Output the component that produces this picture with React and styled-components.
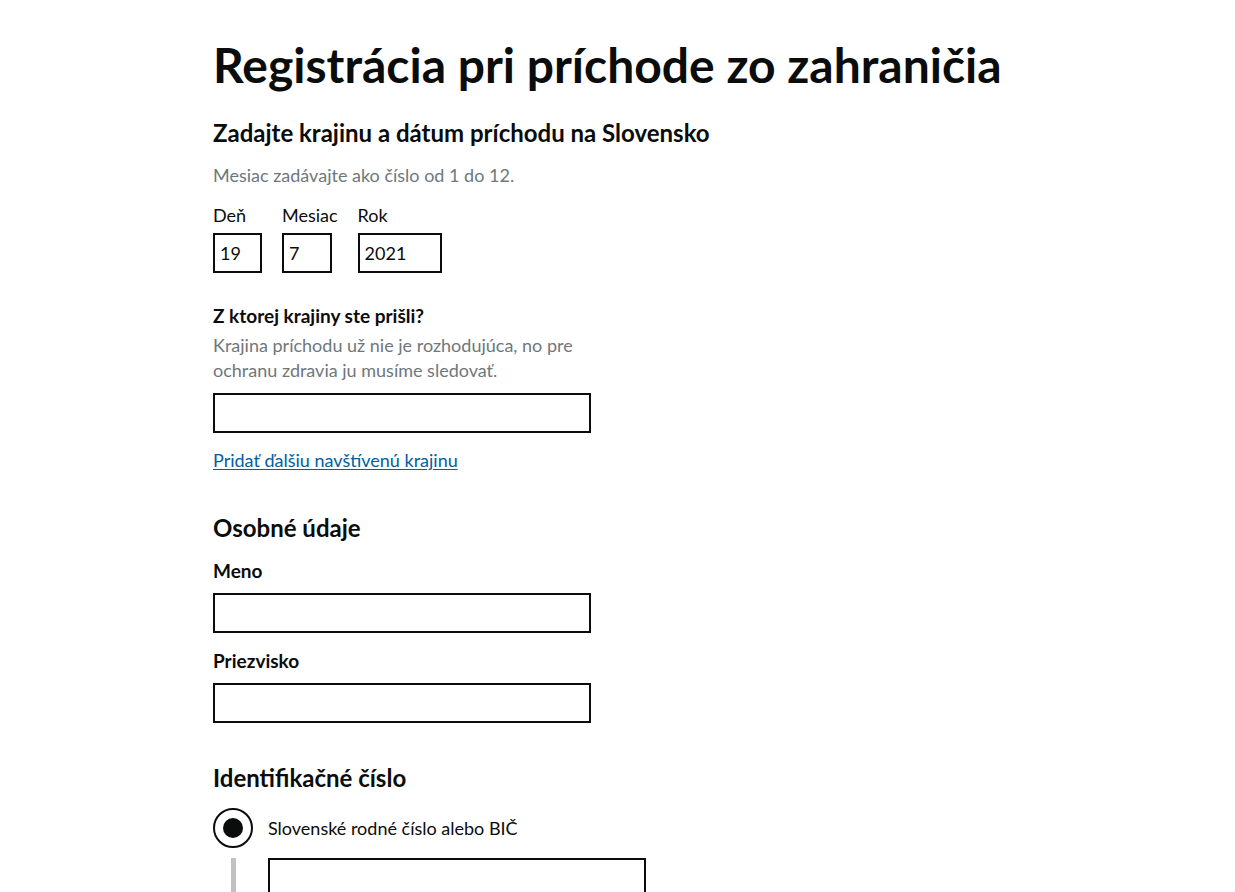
import React from "react";
import styled, { createGlobalStyle } from "styled-components";

const GlobalStyle = createGlobalStyle`
  html, body {
    margin: 0;
    padding: 0;
    background: #ffffff;
  }
  body {
    font-family: "Source Sans Pro", Lato, "Liberation Sans", sans-serif;
    color: #0b0c0c;
  }
`;

const Page = styled.main`
  width: 809px;
  margin: 0 auto;
  padding-top: 40px;
`;

const Title = styled.h1`
  margin: 0 0 28px;
  font-size: 48px;
  line-height: 50px;
  font-weight: 700;
`;

const Heading = styled.h2`
  margin: ${p => (p.$spaced ? "40px" : "0")} 0 15px;
  font-size: 24px;
  line-height: 30px;
  font-weight: 700;
`;

const Hint = styled.div`
  color: #6f777b;
  font-size: 18px;
  line-height: 25px;
  max-width: 380px;
  margin-bottom: ${p => p.$after || 15}px;
`;

const DateRow = styled.div`
  display: flex;
  gap: 20px;
  margin-bottom: 30px;
`;

const DateItem = styled.div`
  display: flex;
  flex-direction: column;
  gap: 5px;
`;

const SmallLabel = styled.label`
  font-size: 18px;
  line-height: 25px;
`;

const Label = styled.label`
  display: block;
  font-size: 19px;
  line-height: 25px;
  font-weight: 700;
  margin-bottom: ${p => p.$after || 10}px;
`;

const Input = styled.input`
  box-sizing: border-box;
  display: block;
  width: ${p => p.$w || 378}px;
  height: 40px;
  border: 2px solid #0b0c0c;
  border-radius: 0;
  padding: 5px;
  margin: 0;
  font: inherit;
  font-size: 18px;
  color: #0b0c0c;
  background: #fff;
  margin-bottom: ${p => p.$after || 0}px;
  outline: none;
`;

const Link = styled.a`
  display: inline-block;
  margin-top: 15px;
  font-size: 18px;
  line-height: 25px;
  color: #005ea5;
  text-decoration: underline;
  text-underline-offset: 2px;
`;

const RadioRow = styled.label`
  display: flex;
  align-items: center;
  gap: 15px;
  font-size: 18px;
  line-height: 25px;
`;

const RadioCircle = styled.span`
  box-sizing: border-box;
  width: 40px;
  height: 40px;
  border: 2px solid #0b0c0c;
  border-radius: 50%;
  display: flex;
  align-items: center;
  justify-content: center;

  &::after {
    content: "";
    width: 20px;
    height: 20px;
    border-radius: 50%;
    background: #0b0c0c;
  }
`;

const Conditional = styled.div`
  margin: 10px 0 0 18px;
  padding-left: 32px;
  border-left: 5px solid #bfc1c3;
  padding-bottom: 20px;
`;

export default function App() {
  return (
    <>
      <GlobalStyle />
      <Page>
        <Title>Registrácia pri príchode zo zahraničia</Title>

        <Heading>Zadajte krajinu a dátum príchodu na Slovensko</Heading>
        <Hint>Mesiac zadávajte ako číslo od 1 do 12.</Hint>
        <DateRow>
          <DateItem>
            <SmallLabel>Deň</SmallLabel>
            <Input $w={49} defaultValue="19" />
          </DateItem>
          <DateItem>
            <SmallLabel>Mesiac</SmallLabel>
            <Input $w={50} defaultValue="7" />
          </DateItem>
          <DateItem>
            <SmallLabel>Rok</SmallLabel>
            <Input $w={84} defaultValue="2021" />
          </DateItem>
        </DateRow>

        <Label $after={5}>Z ktorej krajiny ste prišli?</Label>
        <Hint $after={10}>
          Krajina príchodu už nie je rozhodujúca, no pre ochranu zdravia ju musíme sledovať.
        </Hint>
        <Input />
        <Link href="#">Pridať ďalšiu navštívenú krajinu</Link>

        <Heading $spaced>Osobné údaje</Heading>
        <Label>Meno</Label>
        <Input $after={15} />
        <Label>Priezvisko</Label>
        <Input />

        <Heading $spaced>Identifikačné číslo</Heading>
        <RadioRow>
          <RadioCircle />
          Slovenské rodné číslo alebo BIČ
        </RadioRow>
        <Conditional>
          <Input />
        </Conditional>
      </Page>
    </>
  );
}
